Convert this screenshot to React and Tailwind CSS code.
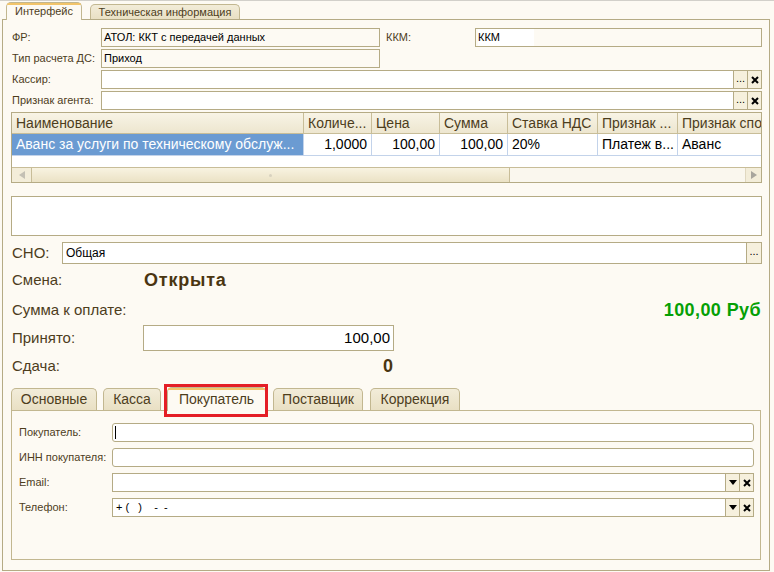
import React from "react";

const LBL = "text-[#4d3d1c]";
const BORDER = "border-[#b5ab85]";

function SmallBtn({ children }) {
  return (
    <div className="w-[14px] h-full flex items-center justify-center bg-[#f6f0dd] border-l border-[#b5ab85] text-[11px] text-black leading-none">
      {children}
    </div>
  );
}

function Dots() {
  return <span className="text-[11px] leading-none -mt-[3px]">...</span>;
}

function XIcon() {
  return (
    <svg width="8" height="8" viewBox="0 0 8 8">
      <path d="M1 1 L7 7 M7 1 L1 7" stroke="#000" strokeWidth="2" />
    </svg>
  );
}

function Down() {
  return (
    <svg width="8" height="5" viewBox="0 0 8 5">
      <path d="M0 0 H8 L4 5 Z" fill="#000" />
    </svg>
  );
}

function Field({ className = "", children, white = false, rounded = false }) {
  return (
    <div
      className={`h-[19px] border ${BORDER} flex items-center ${white ? "bg-white" : "bg-[#fdfaf3]"} ${rounded ? "rounded-[3px]" : ""} ${className}`}
    >
      {children}
    </div>
  );
}

const cols = [
  { title: "Наименование", w: "w-[292px]", val: "Аванс за услуги по техническому обслуж...", sel: true },
  { title: "Количе...", w: "w-[68px]", val: "1,0000", right: true },
  { title: "Цена", w: "w-[68px]", val: "100,00", right: true },
  { title: "Сумма", w: "w-[68px]", val: "100,00", right: true },
  { title: "Ставка НДС", w: "w-[90px]", val: "20%" },
  { title: "Признак ...", w: "w-[80px]", val: "Платеж в..." },
];

function Table() {
  return (
    <div className={`mt-[2px] h-[71px] border ${BORDER} bg-white flex flex-col text-[14px]`}>
      <div className="h-[21px] flex border-b border-[#c8bd98] bg-gradient-to-b from-[#f8f4e6] to-[#ede6cf] text-[#4d3d1c]">
        {cols.map((c, i) => (
          <div key={i} className={`${c.w} shrink-0 border-r border-[#c8bd98] pl-[4px] flex items-center whitespace-nowrap overflow-hidden`}>
            {c.title}
          </div>
        ))}
        <div className="flex-1 pl-[4px] flex items-center whitespace-nowrap overflow-hidden">Признак способа расчета</div>
      </div>
      <div className="h-[22px] flex border-b border-[#c3d3ea] text-black">
        {cols.map((c, i) => (
          <div
            key={i}
            className={`${c.w} shrink-0 border-r border-[#c3d3ea] flex items-center whitespace-nowrap overflow-hidden ${c.right ? "justify-end pr-[4px]" : "pl-[4px]"} ${c.sel ? "bg-[#6b9bd2] text-white" : ""}`}
          >
            {c.val}
          </div>
        ))}
        <div className="flex-1 pl-[4px] flex items-center whitespace-nowrap overflow-hidden">Аванс</div>
      </div>
      <div className="flex-1" />
      <div className="h-[15px] flex border-t border-[#c8bd98] bg-[#faf7ee]">
        <div className="w-[20px] border-r border-[#c8bd98] bg-[#f3edd9] flex items-center justify-center">
          <svg width="6" height="8" viewBox="0 0 6 8"><path d="M6 0 V8 L0 4 Z" fill="#c4c0b4" /></svg>
        </div>
        <div className="w-[478px] border-r border-[#c8bd98] bg-gradient-to-b from-[#f8f3e1] to-[#ebe2c5] flex items-center justify-center">
          <div className="w-[3px] h-[3px] rounded-full bg-[#d8d2bf]" />
        </div>
        <div className="flex-1" />
        <div className="w-[16px] bg-[#f3edd9] border-l border-[#e0d8c0] flex items-center justify-center">
          <svg width="6" height="8" viewBox="0 0 6 8"><path d="M0 0 V8 L6 4 Z" fill="#a8a59c" /></svg>
        </div>
      </div>
    </div>
  );
}

function BottomTab({ children, w, ml, active }) {
  if (active) {
    return (
      <div className={`relative ${w} ${ml} h-[24px] -mb-px z-10 rounded-t-[5px] border border-b-0 border-[#c2b790] bg-[#fdfaf3] flex items-center justify-center text-[14px] text-[#4d3d1c]`}>
        <div className="absolute left-0 right-0 top-0 h-[2px] rounded-t-[5px] bg-[#f2c46a]" />
        {children}
        <div className="absolute -left-[4px] -right-[3px] -top-[4px] -bottom-[6px] border-[3px] border-[#e41e26]" />
      </div>
    );
  }
  return (
    <div className={`${w} ${ml} h-[22px] rounded-t-[5px] border border-b-0 border-[#c2b790] bg-gradient-to-b from-[#f2ecd9] to-[#e9e0c4] flex items-center justify-center text-[14px] text-[#4d3d1c]`}>
      {children}
    </div>
  );
}

export default function App() {
  return (
    <div
      className="w-[774px] h-[572px] bg-[#fdfaf3] border-t border-[#d2d0ca] overflow-hidden"
      style={{ fontFamily: '"Liberation Sans", Arial, sans-serif' }}
    >
      {/* top tabs */}
      <div className="h-[18px] flex items-end pl-[6px]">
        <div className="relative w-[76px] h-[18px] -mb-px z-10 rounded-t-[5px] border border-b-0 border-[#c2b790] bg-[#fdfaf3] flex items-center justify-center text-[11px] text-[#4d3d1c]">
          <div className="absolute left-0 right-0 top-0 h-[2px] rounded-t-[5px] bg-[#f2c46a]" />
          Интерфейс
        </div>
        <div className="ml-[8px] w-[150px] h-[15px] rounded-t-[5px] border border-b-0 border-[#c2b790] bg-gradient-to-b from-[#f2ecd9] to-[#e9e0c4] flex items-center justify-center text-[11px] text-[#4d3d1c]">
          Техническая информация
        </div>
      </div>

      {/* main panel */}
      <div className={`ml-[2px] w-[768px] h-[552px] border ${BORDER} pl-[8px] pr-[7px] pt-[8px] flex flex-col`}>
        {/* row 1 */}
        <div className="h-[19px] flex items-center text-[11px]">
          <div className={`w-[90px] pl-[1px] ${LBL}`}>ФР:</div>
          <Field className="w-[279px] pl-[2px] text-black">АТОЛ: ККТ с передачей данных</Field>
          <div className={`w-[95px] pl-[6px] ${LBL}`}>ККМ:</div>
          <Field className="flex-1 pl-[2px] text-black">
            <span className="bg-white pr-[34px]">ККМ</span>
          </Field>
        </div>
        {/* row 2 */}
        <div className="mt-[2px] h-[19px] flex items-center text-[11px]">
          <div className={`w-[90px] pl-[1px] ${LBL}`}>Тип расчета ДС:</div>
          <Field className="w-[279px] pl-[2px] text-black">Приход</Field>
        </div>
        {/* row 3 */}
        <div className="mt-[2px] h-[19px] flex items-center text-[11px]">
          <div className={`w-[90px] pl-[1px] ${LBL}`}>Кассир:</div>
          <Field white className="flex-1 justify-end">
            <SmallBtn><Dots /></SmallBtn>
            <SmallBtn><XIcon /></SmallBtn>
          </Field>
        </div>
        {/* row 4 */}
        <div className="mt-[2px] h-[19px] flex items-center text-[11px]">
          <div className={`w-[90px] pl-[1px] ${LBL}`}>Признак агента:</div>
          <Field white className="flex-1 justify-end">
            <SmallBtn><Dots /></SmallBtn>
            <SmallBtn><XIcon /></SmallBtn>
          </Field>
        </div>

        <Table />

        <div className={`mt-[13px] h-[40px] border ${BORDER} bg-white`} />

        {/* СНО */}
        <div className="mt-[6px] h-[22px] flex items-center">
          <div className={`w-[51px] pl-[1px] text-[15px] ${LBL}`}>СНО:</div>
          <div className={`flex-1 h-[22px] border ${BORDER} bg-white flex items-center`}>
            <span className="flex-1 pl-[3px] text-[12px] text-black">Общая</span>
            <div className="w-[15px] h-full bg-[#f6f0dd] border-l border-[#b5ab85] flex items-center justify-center">
              <Dots />
            </div>
          </div>
        </div>

        {/* Смена */}
        <div className="h-[32px] flex items-center">
          <div className={`w-[133px] pl-[1px] text-[15px] ${LBL}`}>Смена:</div>
          <div className="text-[18px] font-bold text-[#4a3510] tracking-[0.8px]">Открыта</div>
        </div>
        {/* Сумма */}
        <div className="h-[28px] flex items-center">
          <div className={`pl-[1px] text-[15px] ${LBL}`}>Сумма к оплате:</div>
          <div className="flex-1" />
          <div className="text-[18px] font-bold text-[#05a005] tracking-[0.4px] pr-[1px]">100,00 Руб</div>
        </div>
        {/* Принято */}
        <div className="mt-[1px] h-[26px] flex items-center">
          <div className={`w-[132px] pl-[1px] text-[15px] ${LBL}`}>Принято:</div>
          <div className={`w-[251px] h-[26px] border ${BORDER} bg-white flex items-center justify-end pr-[3px] text-[15px] text-black`}>
            100,00
          </div>
        </div>
        {/* Сдача */}
        <div className="h-[30px] flex items-center">
          <div className={`w-[132px] pl-[1px] text-[15px] ${LBL}`}>Сдача:</div>
          <div className="w-[251px] text-right pr-[1px] text-[18px] font-bold text-[#4a3510]">0</div>
        </div>

        {/* bottom tabs */}
        <div className="h-[29px] flex items-end">
          <BottomTab w="w-[86px]" ml="ml-0">Основные</BottomTab>
          <BottomTab w="w-[58px]" ml="ml-[6px]">Касса</BottomTab>
          <BottomTab w="w-[99px]" ml="ml-[6px]" active>Покупатель</BottomTab>
          <BottomTab w="w-[90px]" ml="ml-[7px]">Поставщик</BottomTab>
          <BottomTab w="w-[90px]" ml="ml-[7px]">Коррекция</BottomTab>
        </div>
        <div className="w-[750px] h-[150px] border border-[#c2b790] pt-[12px] pl-[7px] pr-[6px] flex flex-col gap-[6px] text-[11px]">
          <div className="h-[19px] flex items-center">
            <div className={`w-[93px] ${LBL}`}>Покупатель:</div>
            <Field white rounded className="flex-1 pl-[2px]">
              <div className="w-px h-[13px] bg-black" />
            </Field>
          </div>
          <div className="h-[19px] flex items-center">
            <div className={`w-[93px] ${LBL}`}>ИНН покупателя:</div>
            <Field white rounded className="flex-1" />
          </div>
          <div className="h-[19px] flex items-center">
            <div className={`w-[93px] ${LBL}`}>Email:</div>
            <Field white className="flex-1 justify-end">
              <SmallBtn><Down /></SmallBtn>
              <SmallBtn><XIcon /></SmallBtn>
            </Field>
          </div>
          <div className="h-[19px] flex items-center">
            <div className={`w-[93px] ${LBL}`}>Телефон:</div>
            <Field white className="flex-1">
              <span className="flex-1 pl-[3px] text-black whitespace-pre">+ (   )    -  -</span>
              <SmallBtn><Down /></SmallBtn>
              <SmallBtn><XIcon /></SmallBtn>
            </Field>
          </div>
        </div>
      </div>
    </div>
  );
}
